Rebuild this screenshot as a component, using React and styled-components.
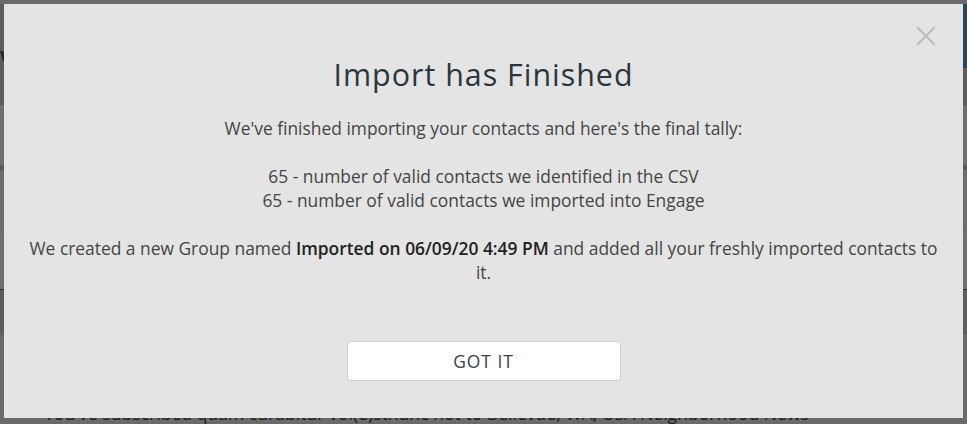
import React from 'react';
import styled, { createGlobalStyle } from 'styled-components';

const Global = createGlobalStyle`
  html, body {
    margin: 0;
    padding: 0;
    width: 967px;
    height: 424px;
    overflow: hidden;
    background: #6a6a6a;
    font-family: 'Open Sans', 'Liberation Sans', sans-serif;
  }
`;

export default function App() {
  return (
    <>
      <Global />
      <Screen>
        <Backdrop>
          <Band h={4} tone="#6a6a6a" />
          <TopBand>
            <Glyph>w</Glyph>
            <BlueBlock />
          </TopBand>
          <Band h={60} tone="#6e6e6e" />
          <Band h={5} tone="#5a5a5a" />
          <Band h={60} tone="#6c6c6c" />
          <Band h={60} tone="#6e6e6e" line />
          <Band h={45} tone="#5d5d5d" />
          <Band h={70} tone="#6a6a6a" />
          <BottomRow>
            <BottomText>
              You've subscribed quam curabitur vol(e)stnunc not to Bellevue, WA, USA Neighborhood News
            </BottomText>
            <BlackTab />
          </BottomRow>
        </Backdrop>

        <Modal>
          <Close aria-label="close">
            <svg width="20" height="20" viewBox="0 0 20 20">
              <path d="M1 1 L19 19 M19 1 L1 19" stroke="#bcbcbc" strokeWidth="2" fill="none" />
            </svg>
          </Close>
          <Title>Import has Finished</Title>
          <Body>
            <Para>We've finished importing your contacts and here's the final tally:</Para>
            <Para>
              65 - number of valid contacts we identified in the CSV
              <br />
              65 - number of valid contacts we imported into Engage
            </Para>
            <Para>
              We created a new Group named <Strong>Imported on 06/09/20 4:49 PM</Strong> and added all
              your freshly imported contacts to it.
            </Para>
          </Body>
          <Button>GOT IT</Button>
        </Modal>
      </Screen>
    </>
  );
}

const Screen = styled.div`
  position: relative;
  width: 967px;
  height: 424px;
  overflow: hidden;
`;

const Backdrop = styled.div`
  display: flex;
  flex-direction: column;
  width: 100%;
`;

const TopBand = styled.div`
  height: 101px;
  background: #5c5c5c;
  display: flex;
  justify-content: space-between;
  align-items: flex-start;
`;

const Glyph = styled.span`
  margin-top: 38px;
  font-size: 18px;
  font-weight: 700;
  color: #1a2430;
`;

const BlueBlock = styled.div`
  width: 60px;
  height: 64px;
  background: #29445f;
`;

const Band = styled.div`
  height: ${(p) => p.h}px;
  background: ${(p) => p.tone};
  border-bottom: ${(p) => (p.line ? '1px solid #333' : 'none')};
  box-sizing: border-box;
`;

const BottomRow = styled.div`
  display: flex;
  justify-content: space-between;
  align-items: flex-start;
  margin-top: -4px;
`;

const BottomText = styled.div`
  padding-left: 44px;
  font-size: 17.6px;
  color: #1a1a1a;
  white-space: nowrap;
`;

const BlackTab = styled.div`
  width: 32px;
  height: 8px;
  margin-top: 4px;
  margin-right: 17px;
  background: #111;
`;

const Modal = styled.div`
  position: absolute;
  top: 4px;
  left: 4px;
  width: 959px;
  height: 414px;
  box-sizing: border-box;
  background: #e4e4e4;
  padding: 53px 20px 37px;
  display: flex;
  flex-direction: column;
  align-items: center;
  text-align: center;
`;

const Close = styled.div`
  position: absolute;
  top: 22px;
  right: 27px;
  width: 20px;
  height: 20px;
  cursor: pointer;
`;

const Title = styled.h2`
  margin: 0;
  font-size: 30.4px;
  line-height: 36px;
  font-weight: 400;
  letter-spacing: 1px;
  color: #2a363d;
`;

const Body = styled.div`
  margin-top: 23px;
  width: 100%;
  font-size: 17.4px;
  line-height: 24px;
  color: #444;
`;

const Para = styled.p`
  margin: 0 0 24px;
  &:last-child {
    margin-bottom: 0;
  }
`;

const Strong = styled.strong`
  font-weight: 600;
  color: #222;
`;

const Button = styled.button`
  margin-top: auto;
  width: 274px;
  height: 40px;
  background: #fff;
  border: 1px solid #cfcfcf;
  border-radius: 4px;
  font-family: 'Open Sans', 'Liberation Sans', sans-serif;
  font-size: 17.4px;
  letter-spacing: 1px;
  color: #3a4246;
  cursor: pointer;
`;
